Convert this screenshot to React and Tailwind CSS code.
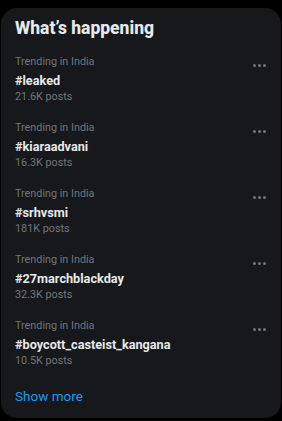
const trends = [
  { tag: "#leaked", posts: "21.6K posts" },
  { tag: "#kiaraadvani", posts: "16.3K posts" },
  { tag: "#srhvsmi", posts: "181K posts" },
  { tag: "#27marchblackday", posts: "32.3K posts" },
  { tag: "#boycott_casteist_kangana", posts: "10.5K posts" },
];

export default function App() {
  return (
    <div
      className="min-h-screen bg-black pt-2 pl-px pr-px"
      style={{ fontFamily: "Roboto, 'Liberation Sans', sans-serif" }}
    >
      <div className="bg-[#16181c] rounded-2xl h-[410px] flex flex-col">
        <h2 className="px-[14px] pt-[9px] pb-[14px] text-[17.5px] font-extrabold text-[#e7e9ea] leading-[22px]">
          What’s happening
        </h2>

        {trends.map((t) => (
          <div key={t.tag} className="flex px-[14px] pt-[1px] pb-[14px] h-[66px]">
            <div className="flex-1 min-w-0">
              <div className="text-[10.8px] text-[#71767b] leading-[16px]">Trending in India</div>
              <div className="text-[12.7px] font-bold text-[#e7e9ea] leading-[16px] mt-[3px]">{t.tag}</div>
              <div className="text-[10.8px] text-[#71767b] leading-[16px]">{t.posts}</div>
            </div>
            <div className="flex gap-[2px] mt-[10px] mr-[1px]">
              <span className="w-[3px] h-[3px] bg-[#71767b] rounded-full"></span>
              <span className="w-[3px] h-[3px] bg-[#71767b] rounded-full"></span>
              <span className="w-[3px] h-[3px] bg-[#71767b] rounded-full"></span>
            </div>
          </div>
        ))}

        <div className="px-[14px] pt-[3px] text-[13.5px] text-[#1d9bf0] leading-[20px]">Show more</div>
      </div>
    </div>
  );
}
